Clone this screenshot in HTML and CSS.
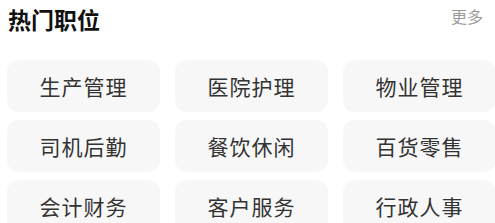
FILE: index.html
```html
<!DOCTYPE html>
<html lang="zh">
<head>
<meta charset="utf-8">
<link rel="stylesheet" href="styles.css">
</head>
<body>
<div class="section">
  <div class="header">
    <h2 class="title">热门职位</h2>
    <span class="more">更多</span>
  </div>
  <div class="grid">
    <div class="cell">生产管理</div>
    <div class="cell">医院护理</div>
    <div class="cell">物业管理</div>
    <div class="cell">司机后勤</div>
    <div class="cell">餐饮休闲</div>
    <div class="cell">百货零售</div>
    <div class="cell">会计财务</div>
    <div class="cell">客户服务</div>
    <div class="cell">行政人事</div>
  </div>
</div>
</body>
</html>
```
FILE: styles.css
```css
html, body {
  margin: 0;
  padding: 0;
  background: #ffffff;
  overflow: hidden;
}
body {
  font-family: "Noto Sans CJK SC", "Noto Sans", sans-serif;
  width: 495px;
  height: 223px;
}
.section {
  padding: 0 0 0 7px;
  width: 503px;
}
.header {
  display: flex;
  justify-content: space-between;
  align-items: flex-start;
  height: 60px;
  padding-right: 27px;
}
.title {
  margin: 4px 0 0 1px;
  font-size: 23px;
  line-height: 30px;
  font-weight: 700;
  color: #111;
}
.more {
  margin-top: 5px;
  font-size: 16px;
  line-height: 22px;
  color: #9a9a9a;
}
.grid {
  display: grid;
  grid-template-columns: repeat(3, 153px);
  column-gap: 15px;
  row-gap: 8px;
}
.cell {
  height: 52px;
  border-radius: 12px;
  background: #f7f7f7;
  display: flex;
  align-items: center;
  justify-content: center;
  font-size: 21px;
  color: #333;
  letter-spacing: 1px;
}
```
